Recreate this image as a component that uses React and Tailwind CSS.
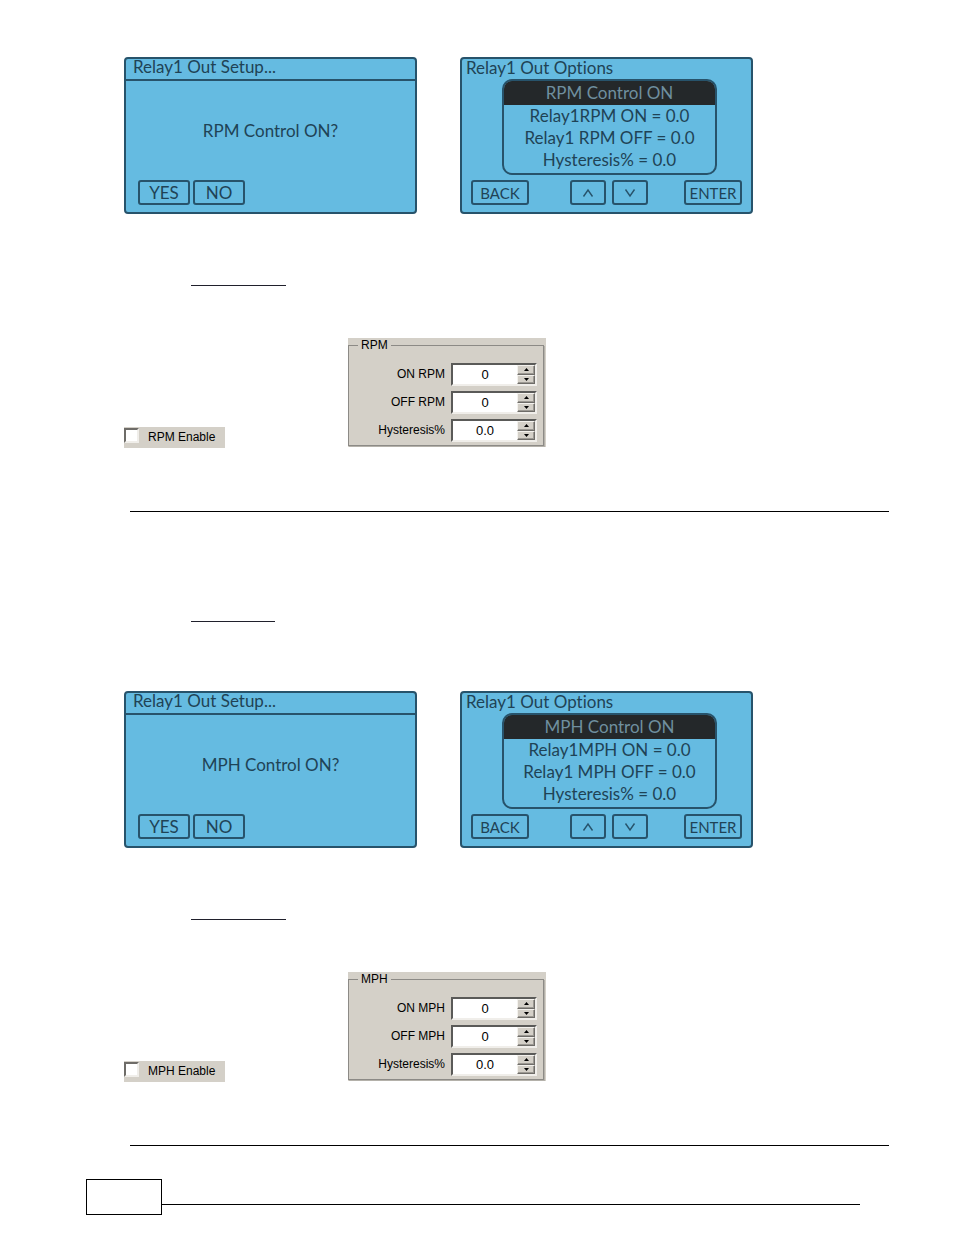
import React from "react";
import clsx from "clsx";

const LCD_FONT = "font-['Lato','Noto_Sans',sans-serif] [font-variant-ligatures:none]";
const WIN_FONT = "font-['Liberation_Sans',Arial,sans-serif]";

function LcdScreen({ children }) {
  return (
    <section
      className={clsx(
        LCD_FONT,
        "flex h-[157px] w-[293px] shrink-0 flex-col rounded-[4px] border-2 border-[#27536b] bg-[#65bbe1] text-[17px] leading-[22px] text-[#1f4356]"
      )}
    >
      {children}
    </section>
  );
}

function LcdButton({ className, children, ...rest }) {
  return (
    <button
      type="button"
      className={clsx(
        "flex h-[25px] items-center justify-center rounded-[3px] border-2 border-[#27536b]",
        className
      )}
      {...rest}
    >
      {children}
    </button>
  );
}

function Chevron({ down }) {
  return (
    <svg width="12" height="10" viewBox="0 0 12 10" fill="none" stroke="#27536b" strokeWidth="1.4" aria-hidden="true">
      <path d={down ? "M1.5 1.5 L6 8 L10.5 1.5" : "M1.5 8.5 L6 2 L10.5 8.5"} />
    </svg>
  );
}

function SetupScreen({ unit }) {
  return (
    <LcdScreen>
      <h2 className="h-[22px] border-b-2 border-[#27536b] pl-[7px] leading-[16px]">Relay1 Out Setup...</h2>
      <p className="flex flex-1 items-center justify-center">{unit} Control ON?</p>
      <div className="flex gap-[3px] px-3 pb-[7px]">
        <LcdButton className="w-[52px]">YES</LcdButton>
        <LcdButton className="w-[52px]">NO</LcdButton>
      </div>
    </LcdScreen>
  );
}

function OptionsScreen({ unit }) {
  return (
    <LcdScreen>
      <h2 className="h-[20px] pl-1 leading-[18px]">Relay1 Out Options</h2>
      <ul className="mr-[34px] ml-10 overflow-hidden rounded-[10px] border-2 border-[#27536b] pb-0.5 text-center">
        <li className="bg-[#24282a] leading-[24px] text-[#6f8f9f]">{unit} Control ON</li>
        <li>Relay1{unit} ON = 0.0</li>
        <li>Relay1 {unit} OFF = 0.0</li>
        <li>Hysteresis% = 0.0</li>
      </ul>
      <div className="mt-auto flex items-center justify-between px-[9px] pb-[7px] text-[15px]">
        <LcdButton className="w-[58px]">BACK</LcdButton>
        <div className="flex gap-[6px] pl-1">
          <LcdButton className="w-[36px]" aria-label="Up">
            <Chevron />
          </LcdButton>
          <LcdButton className="w-[36px]" aria-label="Down">
            <Chevron down />
          </LcdButton>
        </div>
        <LcdButton className="w-[58px]">ENTER</LcdButton>
      </div>
    </LcdScreen>
  );
}

function SpinButton({ label, down }) {
  return (
    <button
      type="button"
      aria-label={label}
      className="flex flex-1 items-center justify-center border border-t-[#f4f2ee] border-r-[#6e6c68] border-b-[#6e6c68] border-l-[#f4f2ee] bg-[#d4d0c8] shadow-[inset_-1px_-1px_0_#9c9993]"
    >
      <svg width="5" height="3" viewBox="0 0 5 3" fill="#000" aria-hidden="true">
        <path d={down ? "M0 0 H5 L2.5 3 Z" : "M0 3 H5 L2.5 0 Z"} />
      </svg>
    </button>
  );
}

function SpinField({ id, label, value }) {
  return (
    <div className="flex items-center justify-end gap-[6px]">
      <label htmlFor={id}>{label}</label>
      <div className="flex h-[23px] w-[86px] border-2 border-t-[#5a5a58] border-r-[#f0eeea] border-b-[#f0eeea] border-l-[#5a5a58] bg-white">
        <input id={id} type="text" inputMode="decimal" defaultValue={value} className="w-0 flex-1 bg-white text-center text-[13px] text-black outline-none" />
        <div className="flex w-[18px] flex-col">
          <SpinButton label={`Increase ${label}`} />
          <SpinButton label={`Decrease ${label}`} down />
        </div>
      </div>
    </div>
  );
}

function WindowsControls({ unit }) {
  const id = unit.toLowerCase();
  return (
    <div className={clsx(WIN_FONT, "flex items-end gap-[123px] pl-[124px] text-[12px] leading-[15px] text-black")}>
      <label className="flex h-[21px] w-[101px] shrink-0 items-center gap-[9px] bg-[#d4d0c8]">
        <input
          type="checkbox"
          className="mb-1 size-[15px] shrink-0 appearance-none border-2 border-t-[#6e6c68] border-r-[#f0eeea] border-b-[#f0eeea] border-l-[#6e6c68] bg-white checked:bg-black"
        />
        <span className="whitespace-nowrap">{unit} Enable</span>
      </label>
      <div className="mb-px h-[109px] w-[198px] shrink-0 bg-[#d4d0c8] pr-[2px]">
        <fieldset className="border border-[#8c8a86] pr-[6px] pb-[3px] shadow-[1px_1px_0_#b4b1aa]">
          <legend className="ml-[9px] bg-[#d4d0c8] px-[3px]">{unit}</legend>
          <div className="flex flex-col gap-[5px] pt-[10px]">
            <SpinField id={`${id}-on`} label={`ON ${unit}`} value="0" />
            <SpinField id={`${id}-off`} label={`OFF ${unit}`} value="0" />
            <SpinField id={`${id}-hysteresis`} label="Hysteresis%" value="0.0" />
          </div>
        </fieldset>
      </div>
    </div>
  );
}

function Screens({ unit }) {
  return (
    <div className="flex gap-[43px] pl-[124px]">
      <SetupScreen unit={unit} />
      <OptionsScreen unit={unit} />
    </div>
  );
}

function Underline({ className }) {
  return <div className={clsx("ml-[191px] h-px bg-[#20202c]", className)} />;
}

function Divider() {
  return <hr className="mt-[63px] mr-[65px] ml-[130px] border-t border-black" />;
}

export default function App() {
  return (
    <main className="bg-white pt-[57px] pb-5">
      <Screens unit="RPM" />
      <Underline className="mt-[71px] w-[95px]" />
      <div className="mt-[52px]">
        <WindowsControls unit="RPM" />
      </div>
      <Divider />

      <Underline className="mt-[109px] w-[84px]" />
      <div className="mt-[69px]">
        <Screens unit="MPH" />
      </div>
      <Underline className="mt-[71px] w-[95px]" />
      <div className="mt-[52px]">
        <WindowsControls unit="MPH" />
      </div>
      <Divider />

      <footer className="mt-[33px] mr-[94px] ml-[86px] flex items-end">
        <div className="h-[36px] w-[76px] border border-black" />
        <div className="mb-[10px] h-px flex-1 bg-black" />
      </footer>
    </main>
  );
}
